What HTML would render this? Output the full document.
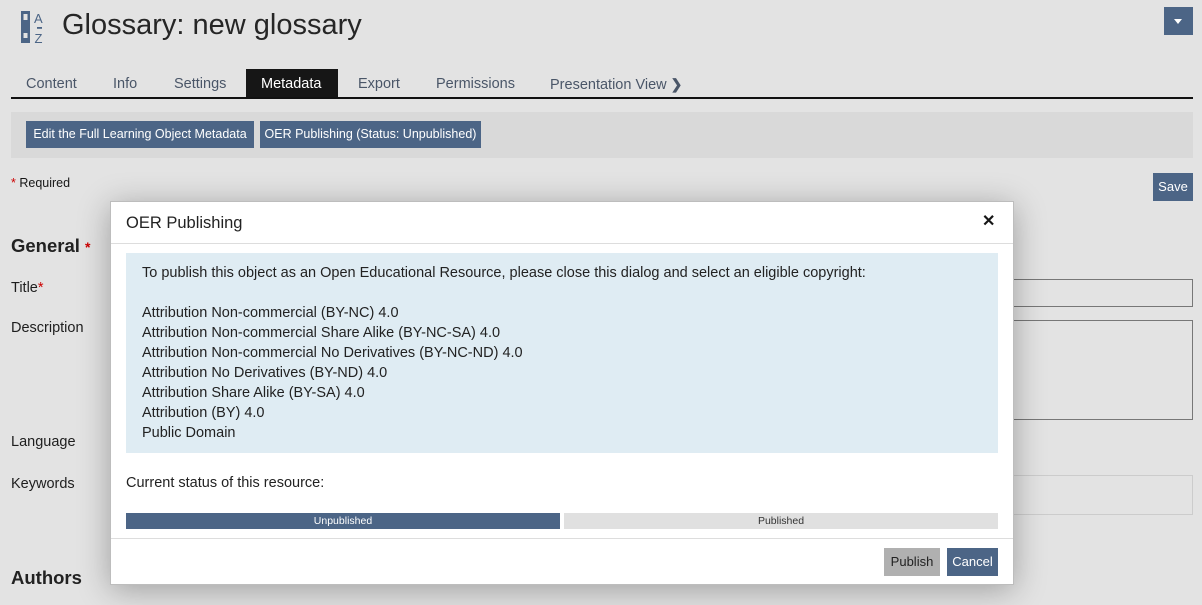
<!DOCTYPE html>
<html><head><meta charset="utf-8"><style>
*{box-sizing:border-box;margin:0;padding:0}
body{width:1202px;height:605px;overflow:hidden;background:#e3e3e3;font-family:"Liberation Sans",sans-serif;color:#161616;position:relative;font-size:14px}
.a{position:absolute;white-space:nowrap}
.tab{position:absolute;top:76px;font-size:14.5px;color:#4a5668;line-height:17px}
.btn{position:absolute;background:#4c6586;color:#fff;font-size:12.5px;padding:0 7px;line-height:27px;height:27px;text-align:center}
.lbl{position:absolute;left:11px;font-size:14.5px;color:#1e1e1e}
.dlg{position:absolute;left:110px;top:201px;width:904px;height:384px;background:#fff;border:1px solid #bdbdbd;box-shadow:0 5px 30px rgba(0,0,0,.3)}
</style></head><body>
<svg class="a" style="left:20px;top:10px" width="26" height="34" viewBox="0 0 26 34">
<rect x="1" y="1" width="9" height="32" fill="#4c6586"/><rect x="3.5" y="4" width="4" height="6" fill="#e3e3e3"/><rect x="3.5" y="23" width="4" height="5" fill="#e3e3e3"/>
<text x="14" y="13" font-family="Liberation Sans" font-size="13" fill="#4c6586">A</text>
<rect x="17" y="17" width="5" height="1.8" fill="#4c6586"/>
<text x="14.5" y="33" font-family="Liberation Sans" font-size="13" fill="#4c6586">Z</text></svg>
<div class="a" style="left:62px;top:9px;font-size:29px;color:#262626">Glossary: new glossary</div>
<div class="a" style="left:1164px;top:7px;width:29px;height:28px;background:#4c6586"><div style="position:absolute;left:10px;top:12px;border-left:4.5px solid transparent;border-right:4.5px solid transparent;border-top:5px solid #fff"></div></div>
<div class="tab" style="left:26px">Content</div>
<div class="tab" style="left:113px">Info</div>
<div class="tab" style="left:174px">Settings</div>
<div class="a" style="left:246px;top:69px;width:92px;height:29px;background:#161616"></div>
<div class="tab" style="left:261px;color:#fff">Metadata</div>
<div class="tab" style="left:358px">Export</div>
<div class="tab" style="left:436px">Permissions</div>
<div class="tab" style="left:550px">Presentation View <b style="font-size:14px">&#x276F;</b></div>
<div class="a" style="left:11px;top:97px;width:1182px;height:2px;background:#111"></div>
<div class="a" style="left:11px;top:112px;width:1182px;height:46px;background:#d9d9d9"></div>
<div class="btn" style="left:26px;top:121px;width:228px;padding:0">Edit the Full Learning Object Metadata</div>
<div class="btn" style="left:260px;top:121px;width:221px;padding:0">OER Publishing (Status: Unpublished)</div>
<div class="a" style="left:11px;top:176px;font-size:12.5px"><span style="color:#c00">*</span> Required</div>
<div class="btn" style="left:1153px;top:173px;width:40px;padding:0;height:28px;line-height:28px;font-size:13px">Save</div>
<div class="a" style="left:11px;top:235px;font-size:18.5px;font-weight:bold;color:#222">General <span style="color:#c00;font-size:14px">*</span></div>
<div class="lbl" style="top:280px">Title<span style="color:#c00">*</span></div>
<div class="lbl" style="top:320px">Description</div>
<div class="lbl" style="top:434px">Language</div>
<div class="lbl" style="top:476px">Keywords</div>
<div class="a" style="left:11px;top:567px;font-size:18.5px;font-weight:bold;color:#222">Authors</div>
<div class="a" style="left:1000px;top:279px;width:193px;height:28px;border:1px solid #777"></div>
<div class="a" style="left:1000px;top:320px;width:193px;height:100px;border:1px solid #777"></div>
<div class="a" style="left:1000px;top:475px;width:193px;height:40px;border:1px solid #ccc"></div>
<div class="dlg">
<div class="a" style="left:15px;top:12px;font-size:16.5px;color:#222">OER Publishing</div>
<div class="a" style="left:871px;top:9px;font-size:16px;font-weight:bold">&#x2715;</div>
<div class="a" style="left:0;top:41px;width:902px;height:1px;background:#ddd"></div>
<div class="a" style="left:15px;top:51px;width:872px;height:200px;background:#dfecf3"></div>
<div class="a" style="left:31px;top:61px;font-size:14.5px;line-height:20px;color:#222">To publish this object as an Open Educational Resource, please close this dialog and select an eligible copyright:<br><br>Attribution Non-commercial (BY-NC) 4.0<br>Attribution Non-commercial Share Alike (BY-NC-SA) 4.0<br>Attribution Non-commercial No Derivatives (BY-NC-ND) 4.0<br>Attribution No Derivatives (BY-ND) 4.0<br>Attribution Share Alike (BY-SA) 4.0<br>Attribution (BY) 4.0<br>Public Domain</div>
<div class="a" style="left:15px;top:273px;font-size:14.5px;color:#222">Current status of this resource:</div>
<div class="a" style="left:15px;top:311px;width:434px;height:16px;background:#4c6586;color:#fff;font-size:10.5px;text-align:center;line-height:16px">Unpublished</div>
<div class="a" style="left:453px;top:311px;width:434px;height:16px;background:#e0e0e0;color:#333;font-size:10.5px;text-align:center;line-height:16px">Published</div>
<div class="a" style="left:0;top:336px;width:902px;height:1px;background:#ddd"></div>
<div class="a" style="left:773px;top:346px;width:56px;height:28px;background:#b0b0b0;color:#222;font-size:13px;line-height:28px;text-align:center">Publish</div>
<div class="a" style="left:836px;top:346px;width:51px;height:28px;background:#4c6586;color:#fff;font-size:13px;line-height:28px;text-align:center">Cancel</div>
</div>
</body></html>
